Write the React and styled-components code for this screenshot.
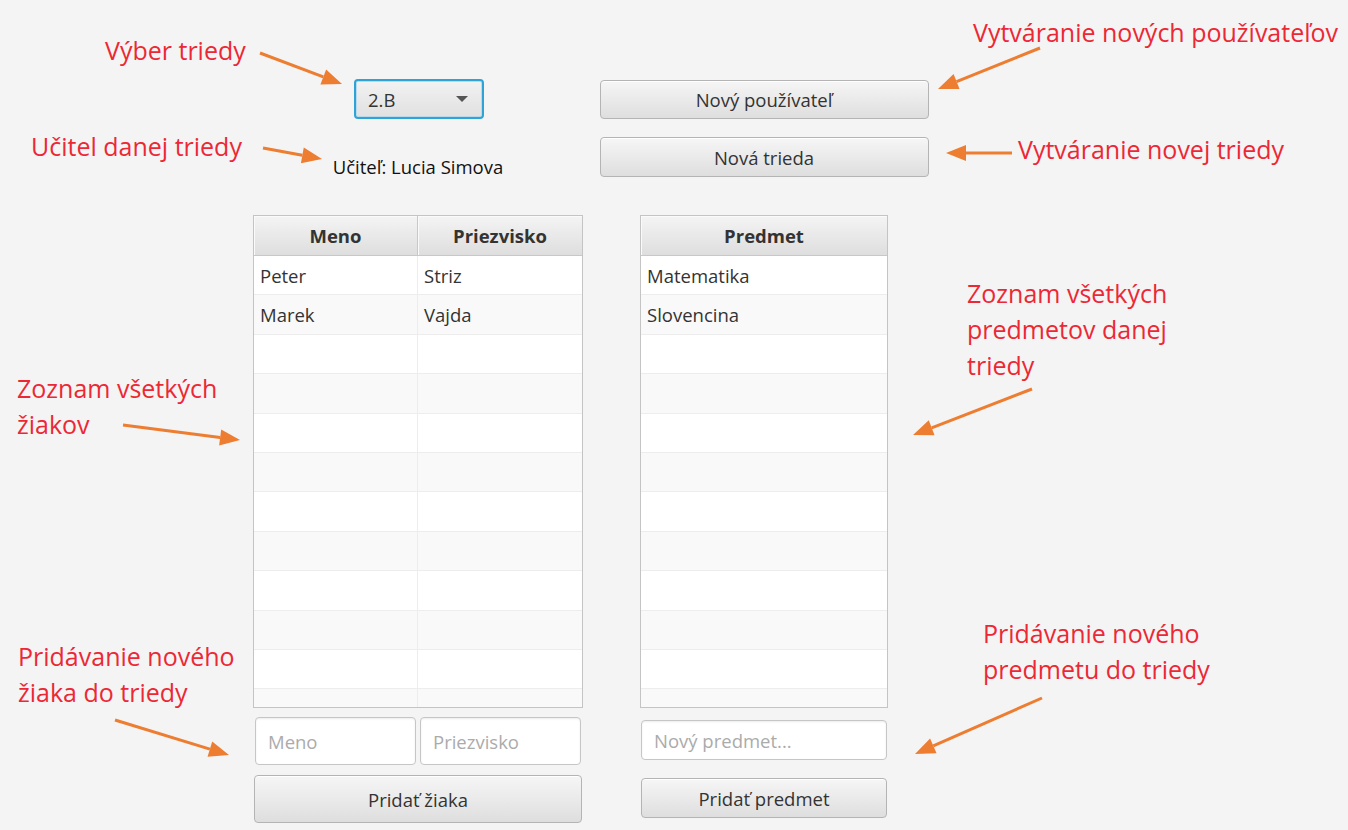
import React from "react"
import styled, { createGlobalStyle } from "styled-components"

const GlobalStyle = createGlobalStyle`
  body {
    margin: 0;
    background: #f4f4f4;
    font-family: "Open Sans", "Noto Sans", sans-serif;
  }
`

const UI_SIZE = "18.5px"

const Canvas = styled.div`
  position: relative;
  width: 1348px;
  height: 830px;
  overflow: hidden;
  background: #f4f4f4;
`

const Main = styled.div`
  display: flex;
  gap: 16px;
  padding-left: 253px;
`

const Column = styled.div`
  width: 330px;
  display: flex;
  flex-direction: column;
  align-items: center;
  padding-top: ${({ $top }) => $top}px;
`

const Combo = styled.div`
  box-sizing: border-box;
  width: 130px;
  height: 40px;
  margin-left: 2px;
  border: 2px solid #2ea3d8;
  border-radius: 4px;
  background: linear-gradient(#f2f2f2, #e0e0e0);
  box-shadow: inset 0 0 0 1px #bcd9ea;
  display: flex;
  align-items: center;
  justify-content: space-between;
  padding: 0 14px 0 12px;
  font-size: ${UI_SIZE};
  color: #333;
`

const Caret = styled.span`
  width: 0;
  height: 0;
  border-left: 6px solid transparent;
  border-right: 6px solid transparent;
  border-top: 6px solid #555;
`

const TeacherLabel = styled.div`
  margin-top: 38px;
  height: 20px;
  line-height: 20px;
  font-size: ${UI_SIZE};
  color: #111;
`

const Button = styled.button`
  box-sizing: border-box;
  width: ${({ $w }) => $w}px;
  height: ${({ $h }) => $h}px;
  margin-top: ${({ $mt }) => $mt}px;
  border: 1px solid #b4b4b4;
  border-radius: 4px;
  background: linear-gradient(#f6f6f6, #dedede);
  box-shadow: inset 0 1px 0 #fff;
  font-family: "Open Sans", "Noto Sans", sans-serif;
  font-size: ${UI_SIZE};
  color: #333;
  padding: 0;
`

const TableBox = styled.div`
  box-sizing: border-box;
  width: ${({ $w }) => $w}px;
  height: 493px;
  margin-top: 38px;
  border: 1px solid #c4c4c4;
  background: #fff;
  overflow: hidden;
`

const HeaderRow = styled.div`
  display: grid;
  grid-template-columns: ${({ $cols }) => $cols};
  height: 40px;
  background: linear-gradient(#f4f4f4, #dedede);
  border-bottom: 1px solid #c8c8c8;
  box-sizing: border-box;
`

const HeaderCell = styled.div`
  display: flex;
  align-items: center;
  justify-content: center;
  font-size: ${UI_SIZE};
  font-weight: 700;
  color: #333;
  border-right: 1px solid #c8c8c8;
  box-shadow: inset 1px 1px 0 #fafafa;
  &:last-child {
    border-right: none;
  }
`

const Row = styled.div`
  display: grid;
  grid-template-columns: ${({ $cols }) => $cols};
  height: 39.4px;
  box-sizing: border-box;
  border-bottom: 1px solid #ededed;
  background: ${({ $odd }) => ($odd ? "#f9f9f9" : "#fff")};
`

const Cell = styled.div`
  display: flex;
  align-items: center;
  padding-left: 6px;
  font-size: ${UI_SIZE};
  color: #333;
  border-right: 1px solid #ededed;
  &:last-child {
    border-right: none;
  }
`

const FieldRow = styled.div`
  display: flex;
  gap: 4px;
  margin-top: ${({ $mt }) => $mt}px;
`

const Field = styled.input`
  box-sizing: border-box;
  width: ${({ $w }) => $w}px;
  height: ${({ $h }) => $h}px;
  border: 1px solid #c6c6c6;
  border-radius: 4px;
  background: #fff;
  box-shadow: inset 0 1px 2px #ececec;
  padding: 0 12px;
  font-family: "Open Sans", "Noto Sans", sans-serif;
  font-size: ${UI_SIZE};
  color: #333;
  outline: none;
  &::placeholder {
    color: #ababab;
  }
`

const Note = styled.div`
  position: absolute;
  left: ${({ $x }) => $x}px;
  top: ${({ $y }) => $y}px;
  color: #ec2834;
  font-size: 25px;
  line-height: 36px;
  white-space: pre;
`

const Arrows = styled.svg`
  position: absolute;
  inset: 0;
  pointer-events: none;
`

const notes = [
  { x: 105, y: 32, text: "Výber triedy" },
  { x: 31, y: 128, text: "Učitel danej triedy" },
  { x: 973, y: 14, text: "Vytváranie nových používateľov" },
  { x: 1018, y: 131, text: "Vytváranie novej triedy" },
  { x: 17, y: 370, text: "Zoznam všetkých\nžiakov" },
  { x: 967, y: 275, text: "Zoznam všetkých\npredmetov danej\ntriedy" },
  { x: 18, y: 638, text: "Pridávanie nového\nžiaka do triedy" },
  { x: 983, y: 615, text: "Pridávanie nového\npredmetu do triedy" },
]

const arrows = [
  [260, 53, 342, 84],
  [263, 148, 322, 159],
  [1040, 48, 938, 89],
  [1012, 153, 946, 153],
  [123, 425, 240, 440],
  [1032, 389, 913, 435],
  [115, 720, 229, 755],
  [1042, 698, 915, 754],
]

function Arrow({ x1, y1, x2, y2 }) {
  const a = Math.atan2(y2 - y1, x2 - x1)
  const len = 20
  const half = 8
  const bx = x2 - Math.cos(a) * len
  const by = y2 - Math.sin(a) * len
  const px = -Math.sin(a) * half
  const py = Math.cos(a) * half
  return (
    <g>
      <line x1={x1} y1={y1} x2={bx} y2={by} stroke="#ed7d31" strokeWidth="3" />
      <polygon
        points={`${x2},${y2} ${bx + px},${by + py} ${bx - px},${by - py}`}
        fill="#ed7d31"
      />
    </g>
  )
}

const students = [
  ["Peter", "Striz"],
  ["Marek", "Vajda"],
]
const subjects = ["Matematika", "Slovencina"]
const ROWS = 12

export default function App() {
  const leftCols = "164px 1fr"
  return (
    <Canvas>
      <GlobalStyle />
      <Main>
        <Column $top={79}>
          <Combo>
            2.B
            <Caret />
          </Combo>
          <TeacherLabel>Učiteľ: Lucia Simova</TeacherLabel>
          <TableBox $w={330}>
            <HeaderRow $cols={leftCols}>
              <HeaderCell>Meno</HeaderCell>
              <HeaderCell>Priezvisko</HeaderCell>
            </HeaderRow>
            {Array.from({ length: ROWS }).map((_, i) => (
              <Row key={i} $cols={leftCols} $odd={i % 2 === 1}>
                <Cell>{students[i] ? students[i][0] : ""}</Cell>
                <Cell>{students[i] ? students[i][1] : ""}</Cell>
              </Row>
            ))}
          </TableBox>
          <FieldRow $mt={9}>
            <Field $w={161} $h={48} placeholder="Meno" />
            <Field $w={161} $h={48} placeholder="Priezvisko" />
          </FieldRow>
          <Button $w={328} $h={48} $mt={10}>Pridať žiaka</Button>
        </Column>
        <Column $top={80}>
          <Button $w={329} $h={39} $mt={0}>Nový používateľ</Button>
          <Button $w={329} $h={40} $mt={18}>Nová trieda</Button>
          <TableBox $w={248}>
            <HeaderRow $cols="1fr">
              <HeaderCell>Predmet</HeaderCell>
            </HeaderRow>
            {Array.from({ length: ROWS }).map((_, i) => (
              <Row key={i} $cols="1fr" $odd={i % 2 === 1}>
                <Cell>{subjects[i] || ""}</Cell>
              </Row>
            ))}
          </TableBox>
          <FieldRow $mt={12}>
            <Field $w={246} $h={40} placeholder="Nový predmet..." />
          </FieldRow>
          <Button $w={246} $h={40} $mt={18}>Pridať predmet</Button>
        </Column>
      </Main>
      {notes.map((n) => (
        <Note key={n.text} $x={n.x} $y={n.y}>
          {n.text}
        </Note>
      ))}
      <Arrows width="1348" height="830">
        {arrows.map(([x1, y1, x2, y2], i) => (
          <Arrow key={i} x1={x1} y1={y1} x2={x2} y2={y2} />
        ))}
      </Arrows>
    </Canvas>
  )
}
